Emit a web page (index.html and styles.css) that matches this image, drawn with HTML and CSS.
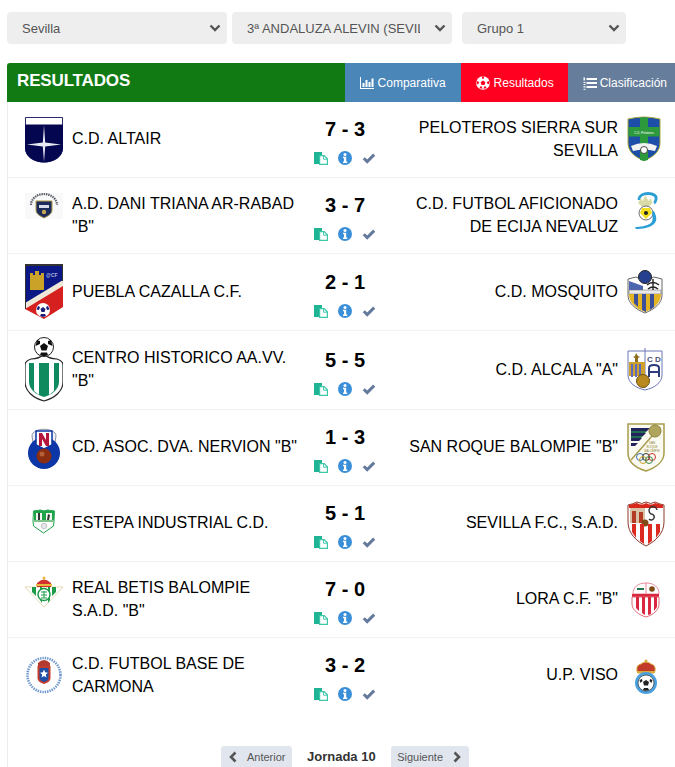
FILE: index.html
```html
<!DOCTYPE html>
<html lang="es">
<head>
<meta charset="utf-8">
<title>Resultados</title>
<link rel="stylesheet" href="styles.css">
</head>
<body>
<svg class="defs" width="0" height="0" aria-hidden="true">
  <symbol id="i-copy" viewBox="0 0 14 14">
    <path d="M0 1h8v3H5v9H0z" fill="#1fb594"/>
    <path d="M5.6 4.6h4.6l3.2 3.2v5.6H5.6z" fill="#fff" stroke="#3cc7a8" stroke-width="1.2"/>
    <path d="M9.6 4.6v3.6h3.8" fill="none" stroke="#3cc7a8" stroke-width="1"/>
  </symbol>
  <symbol id="i-info" viewBox="0 0 14 14">
    <circle cx="7" cy="7" r="7" fill="#3b8fd8"/>
    <circle cx="7" cy="3.4" r="1.5" fill="#fff"/>
    <path d="M5 5.7h3.2v4.8h1v1.5H5v-1.5h1V7.2H5z" fill="#fff"/>
  </symbol>
  <symbol id="i-check" viewBox="0 0 14 14">
    <path d="M1.8 7.2l3.4 3.4 7-7" fill="none" stroke="#64799c" stroke-width="3"/>
  </symbol>
  <symbol id="i-chev" viewBox="0 0 12 8">
    <path d="M1.5 1.5L6 6l4.5-4.5" fill="none" stroke="#555" stroke-width="2.4"/>
  </symbol>
</svg>

<div class="filters">
  <div class="select-wrap w-a">
    <select class="select"><option>Sevilla</option></select>
    <svg class="chev"><use href="#i-chev"/></svg>
  </div>
  <div class="select-wrap w-b">
    <select class="select"><option>3ª ANDALUZA ALEVIN (SEVILLA)</option></select>
    <svg class="chev"><use href="#i-chev"/></svg>
  </div>
  <div class="select-wrap w-c">
    <select class="select"><option>Grupo 1</option></select>
    <svg class="chev"><use href="#i-chev"/></svg>
  </div>
</div>

<section class="panel">
  <header class="panel-head">
    <h1 class="title">RESULTADOS</h1>
    <nav class="tabs">
      <a class="tab tab-blue">
        <svg class="tab-ico" viewBox="0 0 14 14"><path d="M0 1h1v11h13v1H0z" fill="#fff"/><path d="M2.5 7h2v4h-2zM5.5 4h2v7h-2zM8.5 6h2v5h-2zM11.5 2.500h2V11h-2z" fill="#fff"/></svg>
        Comparativa
      </a>
      <a class="tab tab-red">
        <svg class="tab-ico" viewBox="0 0 14 14"><circle cx="7" cy="7" r="6.800" fill="#fff"/><path d="M7 4.600l2.400 1.700-.9 2.800h-3l-.9-2.800zM6 .6h2v1.600L7 3 6 2.200zM.9 5l1.500.4.800 1.400-1.200 1.500L.8 8zM13.100 5l-1.500.4-.8 1.400 1.200 1.500 1.200-.3zM3.600 12.200l.5-1.800 1.500-.2 1 2.600zM10.400 12.200l-.5-1.800-1.500-.2-1 2.600z" fill="#ff0020"/></svg>
        Resultados
      </a>
      <a class="tab tab-slate tab-last">
        <svg class="tab-ico" viewBox="0 0 14 14"><path d="M3.500 2h10.500v2H3.500zM3.500 6h10.500v2H3.500zM3.500 10h10.500v2H3.500z" fill="#fff"/><path d="M.5 1.500h1.500v3H.5zM.5 6h2v1H.5zM.5 8h2v1H.5zM.5 10h2v.8H.5zM.5 11.500h2v.8H.5zM.5 13h2v.8H.5z" fill="#fff"/></svg>
        Clasificación
      </a>
    </nav>
  </header>

  <article class="row">
    <div class="team">
      <svg class="logo" width="38" height="75" viewBox="0 0 38 75">
        <path d="M.5 15.500h37V46c0 9-9 14-18.500 14S.5 55 .5 46z" fill="#fff" stroke="#2a2a6a"/>
        <path d="M0 22.500h38V46c0 9-9.500 14.500-19 14.500S0 55 0 46z" fill="#04064f"/>
        <path d="M19 23l1.200 17.500L36 42.500l-15.800 2L19 60l-1.200-15.500L2 42.500l15.800-2z" fill="#e8eaf4"/>
      </svg>
      <span class="name">C.D. ALTAIR</span>
    </div>
    <div class="result">
      <div class="score">7 - 3</div>
      <div class="actions"><svg class="act"><use href="#i-copy"/></svg><svg class="act"><use href="#i-info"/></svg><svg class="act"><use href="#i-check"/></svg></div>
    </div>
    <div class="team team-away">
      <span class="name">PELOTEROS SIERRA SUR SEVILLA</span>
      <svg class="logo" width="38" height="75" viewBox="0 0 38 75">
        <path d="M1 17q8-2 16-2t16 2v24c0 8-6 14-16 17.500C7 55 1 49 1 41z" fill="#1d4fa8" stroke="#a9a93c"/>
        <path d="M13 15.500h8V58l-4 1-4-1z" fill="#2c9a3c"/>
        <path d="M1.500 25h31v9.500h-31z" fill="#2c9a3c"/>
        <text x="17" y="32" class="crest-txt" text-anchor="middle" fill="#fff">C.D. Peloteros</text>
        <path d="M4 44q13-6 26 0l-2 5q-11-3-22 0z" fill="#f2f2f2"/>
        <circle cx="17" cy="48" r="3.500" fill="#fff" stroke="#222" stroke-width=".8"/>
      </svg>
    </div>
  </article>

  <article class="row">
    <div class="team">
      <svg class="logo" width="38" height="75" viewBox="0 0 38 75">
        <rect y="15" width="38" height="26" fill="#f9f9f9"/>
        <path d="M6 27a13 11 0 0 1 26 0" fill="none" stroke="#5a5f6a" stroke-width="2.200" stroke-dasharray="1.500 .8"/>
        <path d="M11 23h16v9c0 4-4 6-8 8-4-2-8-4-8-8z" fill="#1c2c5a" stroke="#b49a4c"/>
        <path d="M14 27h10v3H14z" fill="#d8dce8"/>
        <circle cx="19" cy="34" r="2.200" fill="#c6a450"/>
      </svg>
      <span class="name">A.D. DANI TRIANA AR-RABAD "B"</span>
    </div>
    <div class="result">
      <div class="score">3 - 7</div>
      <div class="actions"><svg class="act"><use href="#i-copy"/></svg><svg class="act"><use href="#i-info"/></svg><svg class="act"><use href="#i-check"/></svg></div>
    </div>
    <div class="team team-away">
      <span class="name">C.D. FUTBOL AFICIONADO DE ECIJA NEVALUZ</span>
      <svg class="logo" width="38" height="75" viewBox="0 0 38 75">
        <path d="M12 22c0-5 5-6.500 9-6.500 5 0 9 2 8 6-.3 1.500-1 3-2 3.500" fill="none" stroke="#2a9fd6" stroke-width="2.800"/>
        <path d="M11 25l3-5 1.500 3 3-6 3 6 2-3 2 5-5 5-5-1z" fill="#d9dba8"/>
        <circle cx="19" cy="35" r="7" fill="#fff" stroke="#333" stroke-width=".7"/>
        <path d="M15 30l8 0 2 5-6 6-6-6z" fill="#f2e01e"/>
        <circle cx="19" cy="35" r="2" fill="#222"/>
        <path d="M27 33c3 6 3 10 0 13-4 4-12 5-18 5l-1-2c5 0 12-1 16-4 2-2 2-6 1-11z" fill="#2a9fd6"/>
      </svg>
    </div>
  </article>

  <article class="row">
    <div class="team">
      <svg class="logo" width="38" height="76" viewBox="0 0 38 76">
        <path d="M0 10h38v43L19 65 0 55z" fill="#d6201f"/>
        <path d="M.5 10.500h37V29L.5 51z" fill="#0a1785"/>
        <path d="M0 49L38 26v6L0 55z" fill="#efe8d8"/>
        <path d="M0 10h38v2H0zM0 10h1v45H0zM37 10h1v17h-1z" fill="#333"/>
        <path d="M5 19h3v2h2v-4h4v4h2v-2h3v17H5z" fill="#c9a227"/>
        <path d="M7 32l1 4H6zM16 32l1 4h-2z" fill="#c9a227"/>
        <text x="21" y="23" class="crest-txt-b" fill="#aeb4dc">@CF</text>
        <circle cx="18" cy="56" r="7" fill="#fff"/>
        <path d="M18 53l2.500 2-1 3h-3l-1-3zM13 52l2 1-1 3-2.500-.5zM23 52l-2 1 1 3 2.500-.5zM15 62l1-2h4l1 2-3 1z" fill="#1a1d7a"/>
      </svg>
      <span class="name">PUEBLA CAZALLA C.F.</span>
    </div>
    <div class="result">
      <div class="score">2 - 1</div>
      <div class="actions"><svg class="act"><use href="#i-copy"/></svg><svg class="act"><use href="#i-info"/></svg><svg class="act"><use href="#i-check"/></svg></div>
    </div>
    <div class="team team-away">
      <span class="name">C.D. MOSQUITO</span>
      <svg class="logo" width="38" height="76" viewBox="0 0 38 76">
        <path d="M1 25l8-2 9 4 9-4 8 2v16c0 8-7 14-17 18C8 55 1 49 1 41z" fill="#fff" stroke="#666"/>
        <circle cx="18" cy="23" r="6.500" fill="#25408f" stroke="#222"/>
        <path d="M2 36V27l14 5v4z" fill="#4c66b0"/>
        <path d="M2 36h32v4H2z" fill="#e9e9e9" stroke="#666" stroke-width=".5"/>
        <path d="M26 25v11M20 31q6-5 12 0M21 35q5-4 10 0" stroke="#222" stroke-width="1.400" fill="none"/>
        <path d="M2 40h32c0 8-6 14-16 18C8 54 2 48 2 40z" fill="#e2b322"/>
        <path d="M7 40h4v13l-4-4zM15 40h4v18l-4-2zM23 40h4v13l-4 3z" fill="#3a4f9c"/>
      </svg>
    </div>
  </article>

  <article class="row">
    <div class="team">
      <svg class="logo" width="38" height="78" viewBox="0 0 38 78">
        <path d="M6 28c4 0 9-1 13-5 4 4 9 5 13 5 3 1 6 3 6 6v17c0 9-8 16-19 19C8 67 0 60 0 51V34c0-3 3-5 6-6z" fill="#fff" stroke="#222" stroke-width="1.200"/>
        <path d="M4 32h30v19c0 7-7 13-15 15C11 64 4 58 4 51z" fill="#0e8a5e"/>
        <path d="M9 29h5v35l-5-4zM24 29h5v31l-5 4z" fill="#fff"/>
        <circle cx="19" cy="16" r="9.500" fill="#fff" stroke="#222"/>
        <path d="M19 12l4 3-1.500 4.500h-5L15 15zM12 9l3 1v3l-4.500 2zM26 9l-3 1v3l4.500 2zM15 24l1-2.500h6l1 2.500-4 1.500z" fill="#111"/>
      </svg>
      <span class="name">CENTRO HISTORICO AA.VV. "B"</span>
    </div>
    <div class="result">
      <div class="score">5 - 5</div>
      <div class="actions"><svg class="act"><use href="#i-copy"/></svg><svg class="act"><use href="#i-info"/></svg><svg class="act"><use href="#i-check"/></svg></div>
    </div>
    <div class="team team-away">
      <span class="name">C.D. ALCALA "A"</span>
      <svg class="logo" width="38" height="78" viewBox="0 0 38 78">
        <path d="M1 20h34v24c0 8-8 13-17 15C9 57 1 52 1 44z" fill="#fff" stroke="#6a76b4"/>
        <path d="M18 17v40" stroke="#6a76b4"/>
        <text x="27" y="31" class="crest-txt-c" text-anchor="middle" fill="#45507a">C D</text>
        <path d="M22 46V37q0-3 5-3t5 3v9M22 41h10" fill="none" stroke="#2a3a7a" stroke-width="2"/>
        <path d="M2 31h16v14H2z" fill="#d0a02c"/>
        <path d="M4 33h2v13H4zM8 33h2v13H8zM12 33h2v13h-2z" fill="#5e6cc0"/>
        <path d="M9 22l2 3 2 1-2 1 0 4H8v-4l-2-1 2-1z" fill="#8d6f1f"/>
        <circle cx="16" cy="50" r="6.500" fill="#b8891e" stroke="#6f5413"/>
      </svg>
    </div>
  </article>

  <article class="row">
    <div class="team">
      <svg class="logo" width="38" height="75" viewBox="0 0 38 75">
        <path d="M7 26c0-9 24-9 24 0l-1 7H8z" fill="#eef0f4" stroke="#8d93a5"/>
        <circle cx="19" cy="43" r="16" fill="#0d36a6"/>
        <path d="M11 21h16v14l-8 4-8-4z" fill="#fff" stroke="#0d36a6" stroke-width="1.500"/>
        <path d="M14 23h3l4 7v-7h3v13h-3l-4-7v7h-3z" fill="#b5153a"/>
        <circle cx="19" cy="46" r="7.500" fill="#8a2d10"/>
        <circle cx="17" cy="44" r="2.500" fill="#b6603a"/>
      </svg>
      <span class="name">CD. ASOC. DVA. NERVION "B"</span>
    </div>
    <div class="result">
      <div class="score">1 - 3</div>
      <div class="actions"><svg class="act"><use href="#i-copy"/></svg><svg class="act"><use href="#i-info"/></svg><svg class="act"><use href="#i-check"/></svg></div>
    </div>
    <div class="team team-away">
      <span class="name">SAN ROQUE BALOMPIE "B"</span>
      <svg class="logo" width="38" height="75" viewBox="0 0 38 75">
        <path d="M1 14h36v29c0 9-9 15-18 18C9 58 1 52 1 43z" fill="#fbfaf1" stroke="#a89c4e" stroke-width="1.500"/>
        <path d="M4 18h19l-3 3H4zM4 23h15l-3 3H4zM4 28h11l-3 3H4zM4 33h7l-3 3H4z" fill="#23245e"/>
        <path d="M4 21h16l-2 2H4zM4 26h12l-2 2H4z" fill="#1f6e52"/>
        <path d="M4 50L33 17" stroke="#a89c4e" stroke-width="1.500"/>
        <circle cx="28" cy="21" r="6" fill="#b0a55c" stroke="#8e8238"/>
        <text x="25" y="34" class="crest-txt" text-anchor="middle" fill="#8e8238">SAN</text>
        <text x="25" y="38" class="crest-txt" text-anchor="middle" fill="#8e8238">ROQUE</text>
        <text x="25" y="42" class="crest-txt" text-anchor="middle" fill="#8e8238">BALOMPIE</text>
        <circle cx="13" cy="47" r="3.500" fill="none" stroke="#3a6fb5"/>
        <circle cx="19" cy="47" r="3.500" fill="none" stroke="#333"/>
        <circle cx="25" cy="47" r="3.500" fill="none" stroke="#c33"/>
        <circle cx="16" cy="50" r="3.500" fill="none" stroke="#c9a227"/>
        <circle cx="22" cy="50" r="3.500" fill="none" stroke="#3a8a4f"/>
      </svg>
    </div>
  </article>

  <article class="row">
    <div class="team">
      <svg class="logo" width="38" height="75" viewBox="0 0 38 75">
        <path d="M8.500 25l7-1 3.500 1 3.500-1 7 1-.5 10-.5 5-10 7-10-7-.5-5z" fill="#fff" stroke="#1fa44c"/>
        <path d="M9 25l6-1 4 1 4-1 6 1v9H9z" fill="#1fa44c"/>
        <path d="M11 27h6v7h-6zM21 27h6v7h-6z" fill="#eef6ee"/>
        <path d="M13 27h2v7h-2zM23 28l2 1-1 5h-2z" fill="#333"/>
        <path d="M9 34h20v2H9z" fill="#7cc38a"/>
        <circle cx="19" cy="40" r="2.800" fill="#e6e6ee" stroke="#999" stroke-width=".5"/>
      </svg>
      <span class="name">ESTEPA INDUSTRIAL C.D.</span>
    </div>
    <div class="result">
      <div class="score">5 - 1</div>
      <div class="actions"><svg class="act"><use href="#i-copy"/></svg><svg class="act"><use href="#i-info"/></svg><svg class="act"><use href="#i-check"/></svg></div>
    </div>
    <div class="team team-away">
      <span class="name">SEVILLA F.C., S.A.D.</span>
      <svg class="logo" width="38" height="75" viewBox="0 0 38 75">
        <path d="M1 19q5-1 9-3 5 3 9 0 5 3 9 0 4 2 9 3v17c0 11-8 19-18 24C9 55 1 47 1 36z" fill="#fff" stroke="#8d3a2c"/>
        <path d="M2 19q4-1 8-2 5 3 9 0 5 3 9 0 4 1 8 2v3H2z" fill="#d8271c"/>
        <path d="M3 22h15v15H3z" fill="#d9c3a8"/>
        <path d="M5 25h4v12H5zM12 26h4v11h-4z" fill="#b33a24"/>
        <circle cx="18" cy="37" r="3.500" fill="#7e4a16"/>
        <path d="M30 24a4 4 0 1 0-6 4 3 3 0 1 1-2 5" fill="none" stroke="#333" stroke-width="1.400"/>
        <path d="M5 38h4v14l-4-6zM13 38h4v20l-4-3zM21 38h4v17l-4 3zM29 38h4v8l-4 6z" fill="#dd2a20"/>
      </svg>
    </div>
  </article>

  <article class="row">
    <div class="team">
      <svg class="logo" width="38" height="75" viewBox="0 0 38 75">
        <path d="M0 25h38L19 45z" fill="#fff" stroke="#d8c99a" stroke-width=".7"/>
        <path d="M7 25h4v9l-4-4zM15 25h2v16l-2-3zM21 25h2v16l2-3V25zM27 25h4v5l-4 4z" fill="#1f9c4a"/>
        <circle cx="19" cy="32.500" r="6" fill="#fff" stroke="#1f9c4a" stroke-width="1.500"/>
        <path d="M16 30h6M16 33h6M16 36h6M19 29v7" stroke="#1f9c4a"/>
        <path d="M12 21q7-7 14 0v4H12z" fill="#d32f2f"/>
        <path d="M11 22h16v2H11z" fill="#e8b93c"/>
        <circle cx="19" cy="16" r="1.500" fill="#e8b93c"/>
      </svg>
      <span class="name">REAL BETIS BALOMPIE S.A.D. "B"</span>
    </div>
    <div class="result">
      <div class="score">7 - 0</div>
      <div class="actions"><svg class="act"><use href="#i-copy"/></svg><svg class="act"><use href="#i-info"/></svg><svg class="act"><use href="#i-check"/></svg></div>
    </div>
    <div class="team team-away">
      <span class="name">LORA C.F. "B"</span>
      <svg class="logo" width="38" height="75" viewBox="0 0 38 75">
        <path d="M6 32c0-7 5-11 13-11s13 4 13 11v0z" fill="#fff" stroke="#e88a98"/>
        <path d="M19 21v11" stroke="#e88a98"/>
        <path d="M10 26h7v2h-7z" fill="#20744a"/>
        <circle cx="25" cy="27" r="2.800" fill="#7e4a16"/>
        <path d="M5 32h27v3H5z" fill="#d8273f"/>
        <path d="M5 35h27v7c0 6-6 11-13 13C12 53 5 48 5 42z" fill="#fff" stroke="#e26a78"/>
        <path d="M9 35h3v14l-3-3zM15 35h3v18l-3-2zM21 35h3v17l-3 1zM27 35h3v10l-3 4z" fill="#d8273f"/>
      </svg>
    </div>
  </article>

  <article class="row row-last">
    <div class="team">
      <svg class="logo" width="38" height="75" viewBox="0 0 38 75">
        <ellipse cx="19" cy="37" rx="16.500" ry="17" fill="#fff" stroke="#6f97cc" stroke-width="2.600" stroke-dasharray="1.400 1"/>
        <path d="M13 25q6-6 12 0v3H13z" fill="#b33a30"/>
        <path d="M12.500 28h13v12c0 3-3 5-6.500 6-3.500-1-6.500-3-6.500-6z" fill="#c33d2c"/>
        <path d="M14.500 30h9v10c0 2-2 3-4.500 4-2.500-1-4.500-2-4.500-4z" fill="#1d4fa8"/>
        <path d="M19 31.500l1.100 2.800 2.900.4-2.200 1.900.7 3-2.500-1.600-2.500 1.600.7-3-2.200-1.900 2.900-.4z" fill="#fff"/>
      </svg>
      <span class="name">C.D. FUTBOL BASE DE CARMONA</span>
    </div>
    <div class="result">
      <div class="score">3 - 2</div>
      <div class="actions"><svg class="act"><use href="#i-copy"/></svg><svg class="act"><use href="#i-info"/></svg><svg class="act"><use href="#i-check"/></svg></div>
    </div>
    <div class="team team-away">
      <span class="name">U.P. VISO</span>
      <svg class="logo" width="38" height="75" viewBox="0 0 38 75">
        <path d="M10 33q-1-6 4-7 5-4 10 0 5 1 4 7l-1 2H11z" fill="#c23a2a" stroke="#d8a93c"/>
        <path d="M10 33h18v2H10z" fill="#d8a93c"/>
        <circle cx="19" cy="23" r="1.500" fill="#d8a93c"/>
        <circle cx="19" cy="45" r="11" fill="#4aa0de"/>
        <circle cx="19" cy="45" r="8" fill="#fff" stroke="#333" stroke-width=".7"/>
        <path d="M19 42l3 2-1 3.500h-4L16 44zM12.500 42l2.500-1 .5 2-2 2zM25.500 42l-2.500-1-.5 2 2 2zM16 52l1-2h4l1 2-3 .8z" fill="#222"/>
      </svg>
    </div>
  </article>

  <footer class="pager">
    <a class="page-btn"><svg class="page-ico" viewBox="0 0 10 12"><path d="M7.500 1.500L3 6l4.500 4.500" fill="none" stroke="#555" stroke-width="2.600"/></svg>Anterior</a>
    <strong class="round">Jornada 10</strong>
    <a class="page-btn">Siguiente<svg class="page-ico" viewBox="0 0 10 12"><path d="M2.500 1.500L7 6l-4.500 4.500" fill="none" stroke="#555" stroke-width="2.600"/></svg></a>
  </footer>
</section>
</body>
</html>
```

FILE: styles.css
```css
* { box-sizing: border-box; }
html, body { margin: 0; height: 100%; overflow: hidden; background: #fff; }
body {
  padding: 12px 0 0 7px;
  font-family: "Liberation Sans", Arial, sans-serif;
  color: #000;
}
.defs { position: absolute; }

.filters { display: flex; height: 32px; margin-bottom: 19px; }
.select-wrap { position: relative; }
.w-a { width: 220px; margin-right: 5px; }
.w-b { width: 220px; margin-right: 10px; }
.w-c { width: 164px; }
.select {
  appearance: none;
  -webkit-appearance: none;
  display: block;
  width: 100%;
  height: 32px;
  padding: 0 32px 0 15px;
  border: 0;
  border-radius: 4px;
  background: #eeeeee;
  color: #555;
  font: 13px "Liberation Sans", Arial, sans-serif;
}
.chev {
  position: absolute;
  right: 6px;
  top: 12px;
  width: 12px;
  height: 8px;
  pointer-events: none;
}

.panel { border-left: 1px solid #ececec; margin-left: 0; }
.panel-head {
  display: flex;
  justify-content: space-between;
  height: 39px;
  margin-left: -1px;
  background: #117a13;
  border-radius: 3px 0 0 0;
}
.title {
  margin: 0;
  padding: 9px 0 0 10px;
  color: #fff;
  font-size: 17px;
  font-weight: 700;
  line-height: 18px;
  letter-spacing: -0.15px;
}
.tabs { display: flex; }
.tab {
  display: flex;
  align-items: center;
  gap: 4px;
  padding: 0 15px;
  color: #fff;
  font-size: 12px;
}
.tab-red { padding-right: 14px; }
.tab-last { padding-right: 8px; gap: 3px; }
.tab-blue { background: #4a86b8; }
.tab-red { background: #ff0020; }
.tab-slate { background: #677d9c; }
.tab-ico { width: 14px; height: 14px; flex: none; }

.row {
  display: grid;
  grid-template-columns: 293px 88px 1fr;
  border-bottom: 1px solid #f2f2f2;
  width: 667px;
}
.row-last { border-bottom: 0; }
.team {
  display: flex;
  align-items: center;
  gap: 9px;
  padding-left: 17px;
  padding-right: 3px;
}
.team-away {
  justify-content: flex-end;
  padding-left: 8px;
  padding-right: 10px;
  text-align: right;
}
.logo { display: block; flex: none; }
.name { font-size: 16px; line-height: 23px; padding-bottom: 2px; }
.result {
  display: flex;
  flex-direction: column;
  align-items: center;
  justify-content: center;
  padding-top: 3px;
}
.score { font-size: 20px; font-weight: 700; line-height: 24px; margin-bottom: 10px; }
.actions { display: flex; gap: 10px; }
.act { width: 14px; height: 14px; display: block; }

.crest-txt { font: 3px "Liberation Sans", Arial, sans-serif; }
.crest-txt-b { font: 700 5px "Liberation Sans", Arial, sans-serif; }
.crest-txt-c { font: 700 8px "Liberation Sans", Arial, sans-serif; }

.pager {
  display: flex;
  justify-content: center;
  align-items: center;
  gap: 15px;
  width: 674px;
  margin-top: 33px;
}
.page-btn {
  display: flex;
  align-items: center;
  gap: 9px;
  height: 21px;
  padding: 0 6.500px;
  background: #e1e6ee;
  border-radius: 3px 3px 0 0;
  color: #555;
  font-size: 11px;
}
.page-ico { width: 10px; height: 12px; flex: none; }
.round { font-size: 13px; color: #333; }
```
